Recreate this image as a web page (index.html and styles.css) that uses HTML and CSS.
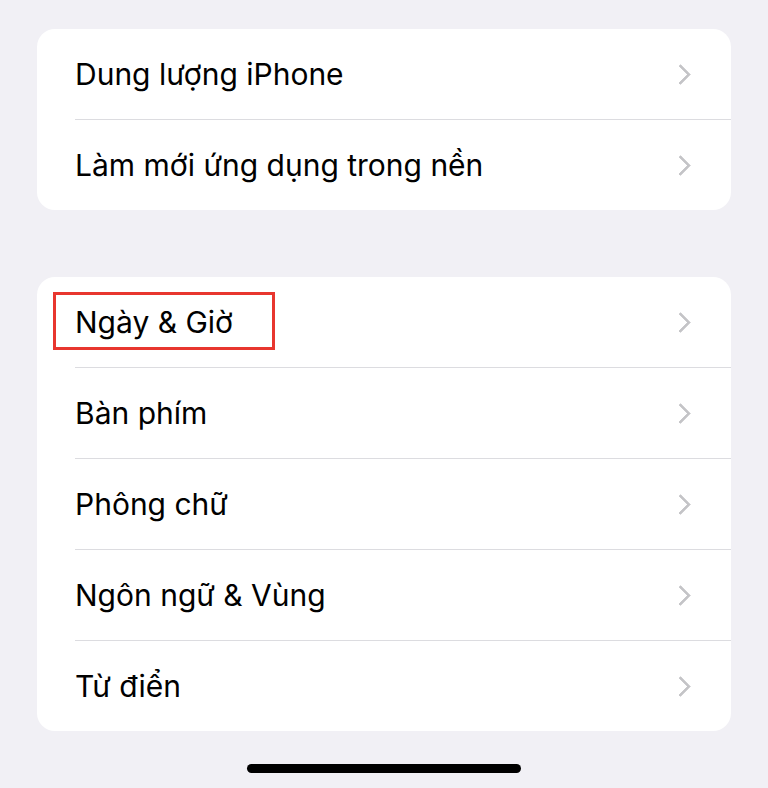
FILE: index.html
```html
<!DOCTYPE html>
<html lang="vi">
<head>
    <meta charset="UTF-8">
    <title>Cài đặt chung</title>
    <link rel="stylesheet" href="styles.css">
</head>
<body>
    <div class="screen">
        <!-- Group 1 -->
        <div class="group">
            <div class="row"><span class="label">Dung lượng iPhone</span><span class="chev"></span></div>
            <div class="row"><span class="label">Làm mới ứng dụng trong nền</span><span class="chev"></span></div>
        </div>

        <!-- Group 2 -->
        <div class="group">
            <div class="row">
                <span class="label">Ngày &amp; Giờ</span><span class="chev"></span>
                <div class="highlight"></div>
            </div>
            <div class="row"><span class="label">Bàn phím</span><span class="chev"></span></div>
            <div class="row"><span class="label">Phông chữ</span><span class="chev"></span></div>
            <div class="row"><span class="label">Ngôn ngữ &amp; Vùng</span><span class="chev"></span></div>
            <div class="row"><span class="label">Từ điển</span><span class="chev"></span></div>
        </div>

        <div class="home-bar"></div>
    </div>
</body>
</html>
```

FILE: styles.css
```css
html, body { margin: 0; padding: 0; background: #f1f0f5; }
body { font-family: Inter, "Noto Sans", sans-serif; color: #000; }
.screen { height: 788px; padding: 29px 37px 0; box-sizing: border-box; display: flex; flex-direction: column; }
.group { background: #fff; border-radius: 18px; margin-bottom: 67px; }
.group:nth-child(2) { margin-bottom: 0; }
.row { position: relative; height: 90px; display: flex; align-items: center; margin-left: 38px; padding-right: 40px; }
.row + .row { border-top: 1px solid #dcdce0; }
.label { flex: 1; font-size: 30px; margin-top: -1px; }
.chev { width: 12px; height: 12px; border-top: 3px solid #c4c4c7; border-right: 3px solid #c4c4c7; transform: rotate(45deg); margin-right: 3px; border-radius: 1px; }
.highlight { position: absolute; left: -22px; top: 15px; width: 216px; height: 52px; border: 3px solid #e8362f; }
.home-bar { width: 274px; height: 9px; border-radius: 5px; background: #000; margin: auto auto 15px; }
```
